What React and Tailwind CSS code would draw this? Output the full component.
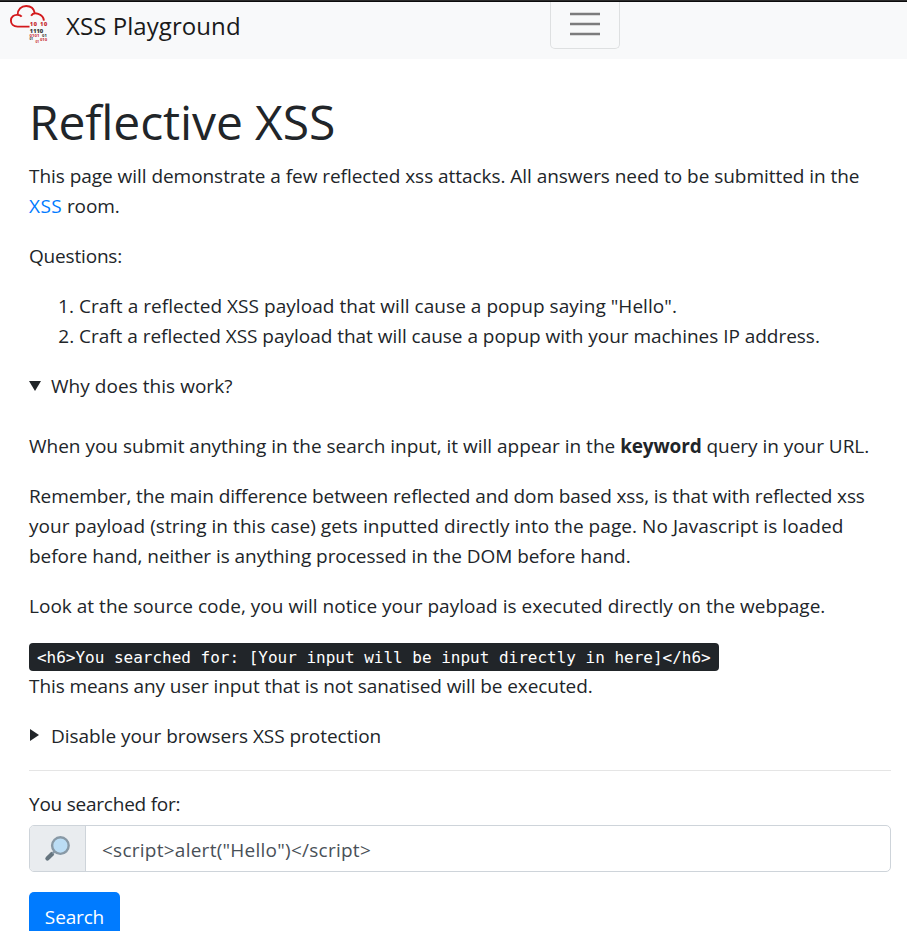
function CloudLogo() {
  return (
    <svg width="42" height="42" viewBox="0 0 42 42" className="block" fontFamily="'Open Sans', sans-serif" fontWeight="700">
      <path
        d="M21.5 23.6H9.6C5.4 23.6 2.9 20.9 2.9 17.6C2.9 13.9 5.8 11.5 9.7 11.9C9.5 6.5 13.3 3 18.2 3C22.5 3 25.9 5.6 26.7 9.9M9.7 11.9C11.7 12 12.8 12.6 13.7 13.6M23.1 12.8C24.5 10.5 27.4 9.9 30.2 10.9C33.4 12 35.7 14.4 35.9 17.6"
        fill="none"
        stroke="#d3191c"
        strokeWidth="1.9"
      />
      <text x="22" y="22.9" fontSize="5.4" textLength="6.8" stroke="#c4161c" strokeWidth="0.2" fill="#c4161c">10</text>
      <text x="32.2" y="22.9" fontSize="5.4" textLength="6.8" stroke="#c4161c" strokeWidth="0.2" fill="#c4161c">10</text>
      <text x="21.8" y="29.5" fontSize="5.8" textLength="13.4" stroke="#2c2c2c" strokeWidth="0.2" fill="#2c2c2c">1110</text>
      <text x="21.6" y="33.9" fontSize="4.2" textLength="9.8" fill="#c82a2e">0101</text>
      <text x="34" y="33.9" fontSize="4.2" textLength="5" fill="#333333">01</text>
      <text x="21.6" y="37.4" fontSize="3.2" textLength="3.6" fill="#333333">01</text>
      <text x="31.9" y="37.6" fontSize="4.2" textLength="7.2" fill="#c82a2e">010</text>
      <text x="27.6" y="39.8" fontSize="3.2" textLength="3.6" fill="#c82a2e">01</text>
    </svg>
  );
}

function Navbar() {
  return (
    <nav className="flex h-[57px] items-start overflow-hidden bg-[#f8f9fa]">
      <div className="flex w-[550px] items-start pl-2">
        <div className="pt-px">
          <CloudLogo />
        </div>
        <span className="ml-4 pt-[6px] text-[24px] leading-9 tracking-[0.07px] text-[#1a1a1a]">XSS Playground</span>
      </div>
      <button aria-label="Menu" className="flex h-[47px] w-[70px] justify-center rounded-b-[5px] border border-t-0 border-[#dee0e1]">
        <svg width="38" height="38" viewBox="0 0 38 38" className="mt-[3px]">
          <path d="M4 9h30M4 19h30M4 29h30" stroke="#7c7c7d" strokeWidth="2.5" />
        </svg>
      </button>
    </nav>
  );
}

export default function App() {
  return (
    <div className="h-[931px] overflow-hidden bg-white font-['Open_Sans',sans-serif] text-[19px] leading-[30px] whitespace-nowrap text-[#212529]">
      <div className="h-px bg-[#2b2b2b]" />
      <div className="h-px bg-[#0c0c0d]" />
      <Navbar />
      <main className="px-[29px] pt-[33px] pr-4">
        <h1 className="mb-[9px] text-[48px] leading-[60px] tracking-[-0.12px]">Reflective XSS</h1>
        <p className="mb-5">
          <span className="tracking-[-0.045px]">This page will demonstrate a few reflected xss attacks. All answers need to be submitted in the</span>
          <br />
          <a className="tracking-[0.4px] text-[#007bff]">XSS</a> <span className="tracking-[-0.1px]">room.</span>
        </p>
        <p className="mb-5 tracking-[-0.18px]">Questions:</p>
        <ol className="mb-5 list-decimal pl-[50px]">
          <li className="tracking-[0.045px]">Craft a reflected XSS payload that will cause a popup saying "Hello".</li>
          <li className="tracking-[-0.03px]">Craft a reflected XSS payload that will cause a popup with your machines IP address.</li>
        </ol>
        <div className="flex items-center">
          <svg width="12" height="10" viewBox="0 0 12 10" className="mr-[10px]">
            <path d="M0 0h12L6 10z" fill="#212529" />
          </svg>
          <span className="tracking-[0.04px]">Why does this work?</span>
        </div>
        <p className="mt-[30px] mb-5">
          <span className="tracking-[-0.005px]">When you submit anything in the search input, it will appear in the </span>
          <b className="tracking-[-0.15px]">keyword</b> <span className="tracking-[-0.04px]">query in your URL.</span>
        </p>
        <p className="mb-5">
          <span className="tracking-[-0.11px]">Remember, the main difference between reflected and dom based xss, is that with reflected xss</span>
          <br />
          <span className="tracking-[0.06px]">your payload (string in this case) gets inputted directly into the page. No Javascript is loaded</span>
          <br />
          <span className="tracking-[-0.04px]">before hand, neither is anything processed in the DOM before hand.</span>
        </p>
        <p className="mb-5 tracking-[0.02px]">Look at the source code, you will notice your payload is executed directly on the webpage.</p>
        <div className="flex h-[30px] items-end">
          <code className="block h-7 rounded-[4px] bg-[#212529] px-2 font-['DejaVu_Sans_Mono',monospace] text-[16px] leading-[30px] tracking-[-0.008px] text-white">
            {"<h6>You searched for: [Your input will be input directly in here]</h6>"}
          </code>
        </div>
        <p className="mb-5 tracking-[-0.08px]">This means any user input that is not sanatised will be executed.</p>
        <div className="flex items-center">
          <svg width="10" height="12" viewBox="0 0 10 12" className="relative -top-px mr-3">
            <path d="M1 0v12L10 6z" fill="#212529" />
          </svg>
          <span className="tracking-[-0.03px]">Disable your browsers XSS protection</span>
        </div>
        <hr className="mt-[19px] border-t border-[#e5e5e5]" />
        <p className="mt-[18px] tracking-[-0.23px]">You searched for:</p>
        <div className="mt-[6px] flex h-[47px] overflow-hidden rounded-[5px] border border-[#ced4da] bg-white">
          <div className="flex w-14 items-center justify-center border-r border-[#ced4da] bg-[#e9ecef] pr-[2px]">
            <svg width="26" height="26" viewBox="0 0 26 26">
              <path d="M3.4 22.6L8 18" stroke="#66757f" strokeWidth="4.2" strokeLinecap="round" />
              <path d="M8.5 17.5l3-3" stroke="#8899a6" strokeWidth="2.4" />
              <circle cx="16.4" cy="9.6" r="8.3" fill="#bbddf5" stroke="#8899a6" strokeWidth="2.4" />
            </svg>
          </div>
          <div className="px-4 pt-[9px] tracking-[0.25px] text-[#495057]">{'<script>alert("Hello")</script>'}</div>
        </div>
        <button className="mt-5 block h-[47px] w-[91px] rounded-[5px] bg-[#007bff] pt-[2px] tracking-[-0.15px] text-white">Search</button>
      </main>
    </div>
  );
}
